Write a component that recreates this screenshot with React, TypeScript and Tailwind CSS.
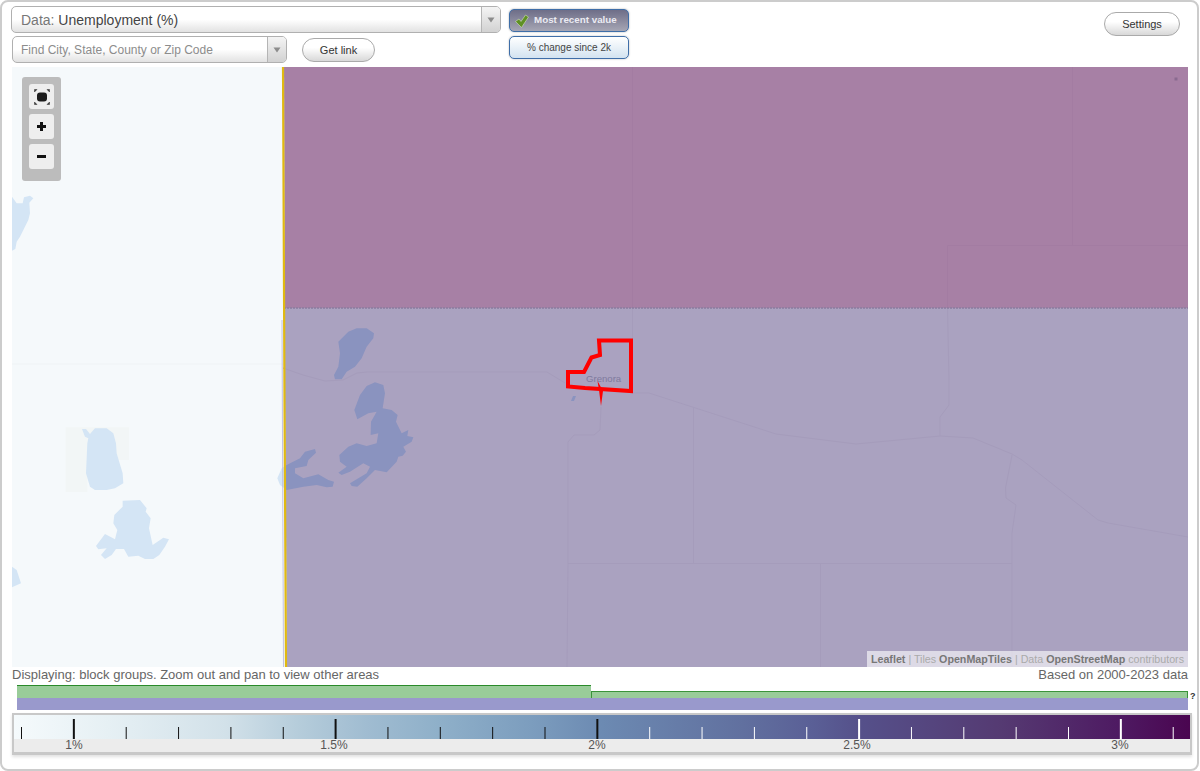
const ticks = Array.from({ length: 23 }, (_, i) => ({
  x: 7.5 + 52.35 * i,
  major: i % 5 === 1,
  light: i > 11,
}));

const legendLabels = [
  { text: '1%', x: 60 },
  { text: '1.5%', x: 320 },
  { text: '2%', x: 583 },
  { text: '2.5%', x: 843 },
  { text: '3%', x: 1106 },
];

const lake1 = 'M205,95 L235,65 L260,55 L290,55 L312,70 L310,85 L290,110 L275,145 L255,170 L230,185 L215,208 L195,208 L192,195 L205,170 L210,130 Z';
const lake2 = 'M253,300 L270,255 L290,228 L315,217 L340,225 L345,250 L338,295 L365,300 L383,315 L378,335 L395,370 L415,360 L412,378 L430,382 L425,395 L400,410 L408,425 L398,437 L385,440 L380,455 L350,487 L315,480 L290,505 L262,530 L245,528 L240,520 L290,490 L300,470 L280,460 L240,485 L215,495 L205,488 L230,470 L210,455 L208,435 L235,410 L260,400 L290,408 L320,400 L325,370 L302,375 L303,335 L320,305 L295,310 L262,328 Z';
const lake3 = 'M22,505 L35,475 L50,465 L90,445 L105,425 L135,417 L138,428 L115,450 L110,468 L75,475 L75,490 L100,505 L145,493 L175,510 L192,515 L188,530 L170,532 L140,525 L100,530 L50,540 L30,525 Z';

function MapCanvas() {
  return (
    <svg className="block h-full w-full" viewBox="12 67 1176 600">
      <defs>
        <clipPath id="state-clip">
          <polygon points="284,67 1188,67 1188,667 287,667 285,400" />
        </clipPath>
      </defs>
      <rect x="12" y="67" width="1176" height="600" fill="#f5f9fb" />

      {/* Basemap on the uncoloured side */}
      <path d="M12,364 L284,364" stroke="#eff3f5" strokeWidth="1" fill="none" />
      <g transform="translate(0 180) scale(0.3333)" fill="#d4e5f5">
        <path d="M197,742 H387 V840 H262 V936 H197 Z" fill="#f2f6f6" />
        <path d="M36,50 L50,70 L68,70 L72,52 L90,47 L100,55 L88,68 L90,100 L85,120 L60,170 L50,185 L46,207 L36,212 Z" />
        <path d="M246,747 L258,747 L270,762 L285,745 L320,745 L340,760 L348,790 L350,820 L368,880 L370,910 L345,925 L320,930 L285,930 L270,920 L258,880 L262,790 L265,775 L255,770 Z" />
        <path d="M368,962 L420,960 L440,985 L437,995 L452,1015 L447,1045 L458,1095 L490,1073 L507,1078 L495,1100 L478,1125 L460,1137 L435,1137 L415,1127 L385,1130 L372,1107 L348,1107 L335,1125 L315,1137 L303,1125 L320,1105 L295,1108 L288,1098 L315,1062 L345,1078 L352,1050 L340,1030 L343,1005 L368,980 Z" />
        <path d="M36,1160 L50,1170 L63,1210 L36,1222 Z" />
      </g>
      <g transform="translate(270 310) scale(0.3333)" fill="#d4e5f5">
        <path d={lake3} />
      </g>

      {/* Choropleth fills */}
      <g clipPath="url(#state-clip)">
        <rect x="280" y="67" width="910" height="241" fill="#a780a5" />
        <rect x="280" y="308" width="910" height="360" fill="#aaa2c0" />
        <g transform="translate(270 310) scale(0.3333)" fill="#8a93bf">
          <path d={lake1} />
          <path d={lake2} />
          <path d={lake3} />
        </g>
        <path d="M571,401 L573,396 L576,396 L574,401 Z" fill="#8a93bf" />
      </g>

      {/* Boundaries and roads */}
      <g fill="none" stroke="#a37ca2" strokeWidth="1">
        <path d="M632.5,67 V308 M1072.5,67 V245.5 M947.5,308 V245.5 H1188" />
      </g>
      <g fill="none" stroke="#a59cbb" strokeWidth="1">
        <path d="M283,368 L303,375 L325,381 L343,380 L357,373 L367,372 L547,372 L565,383" />
        <path d="M632.5,308 V340 M632,393 L649,393 L776,434 L856,444 L940,436 L973,438 L1012,454 L1022,460 L1098,520 L1108,523 L1188,537" />
        <path d="M947.5,308 L949,380 V405 L940,417 V436" />
        <path d="M1012,455 L1005.5,488 L1006,498 L1016,505 L1012,533 V667" />
        <path d="M693.5,408 V563.5 M568,563.5 H1012 M820.5,563.5 V667" />
        <path d="M601,407 L600,430 L594,435 H574 L568,442 V563 L567,667" />
      </g>
      <path d="M284,308 H1188" stroke="#8a7c9f" strokeWidth="1.5" strokeDasharray="2 1" fill="none" />
      <rect x="1174.5" y="77.5" width="3" height="3" fill="#8a6a90" />

      {/* State line */}
      <path d="M283,67 L284.5,400 L286,667" stroke="#e0b912" strokeWidth="2.2" fill="none" />
      <path d="M282,320 L283.5,667" stroke="#b4b4d8" strokeWidth="0.8" fill="none" />

      {/* Selected place */}
      <text x="586" y="382" fontSize="9.6" fill="#7f7a9e" fontFamily="'Liberation Sans', sans-serif">
        Grenora
      </text>
      <path
        d="M599,340.5 L631,340.5 L631,391 L585,388 L568,386.5 L568,372 L584,372 L591.5,357.5 L600,355 Z"
        fill="none"
        stroke="#ff0000"
        strokeWidth="4"
      />
      <path d="M597.5,381 L599,390 L601,406 L603,391 Z" fill="#ff0000" />
    </svg>
  );
}

function ChevronSlot({ className }: { className: string }) {
  return (
    <div className={`flex items-center justify-center border-l border-[#b5b5b5] bg-gradient-to-b from-[#f4f4f4] to-[#d2d2d2] ${className}`}>
      <svg width="8" height="6" viewBox="0 0 8 6">
        <path d="M0.5,0.5 H7.5 L4,5.5 Z" fill="#8c8c8c" />
      </svg>
    </div>
  );
}

function MapControls() {
  return (
    <div className="absolute left-[10px] top-[10px] flex h-[104px] w-[39px] flex-col gap-[5px] rounded-[3px] bg-[#bcbcbc] px-[7px] py-[7px]">
      <button className="flex h-[25px] w-[25px] items-center justify-center rounded-[3px] bg-[#eeeeee]">
        <svg width="16" height="16" viewBox="0 0 16 16">
          <rect x="3" y="3.5" width="10" height="9" rx="3" fill="#1c1c1c" />
          <path d="M0.5,0.5 H3 L0.5,3 Z M15.5,0.5 H13 L15.5,3 Z M0.5,15.5 H3 L0.5,13 Z M15.5,15.5 H13 L15.5,13 Z" fill="#333" stroke="#333" strokeWidth="0.5" />
        </svg>
      </button>
      <button className="flex h-[25px] w-[25px] items-center justify-center rounded-[3px] bg-[#eeeeee]">
        <svg width="9" height="9" viewBox="0 0 9 9">
          <path d="M3,0 H6 V3 H9 V6 H6 V9 H3 V6 H0 V3 H3 Z" fill="#111" />
        </svg>
      </button>
      <button className="flex h-[25px] w-[25px] items-center justify-center rounded-[3px] bg-[#eeeeee]">
        <svg width="9" height="3" viewBox="0 0 9 3">
          <rect width="9" height="3" fill="#111" />
        </svg>
      </button>
    </div>
  );
}

export default function App() {
  return (
    <div className="h-[771px] w-[1199px] overflow-hidden rounded-[8px] border-2 border-[#cccccc] bg-white font-['Liberation_Sans',Arial,sans-serif]">
      {/* Toolbar */}
      <div className="flex h-[65px]">
        <div className="ml-[9px] mt-[4px] w-[490px]">
          <div className="flex h-[27px] overflow-hidden rounded-[5px] border border-[#b0b0b0] bg-gradient-to-b from-white from-50% to-[#e2e2e2]">
            <div className="flex-1 pl-[9px] text-[14px] leading-[26px] text-[#444]">
              <span className="text-[#777]">Data:</span> Unemployment (%)
            </div>
            <ChevronSlot className="w-[19px]" />
          </div>
          <div className="mt-[3px] flex">
            <div className="ml-px flex h-[27px] w-[275px] overflow-hidden rounded-[5px] border border-[#b0b0b0] bg-gradient-to-b from-white from-50% to-[#e2e2e2]">
              <div className="flex-1 pl-[8px] text-[12px] leading-[26px] text-[#8c8c8c]">Find City, State, County or Zip Code</div>
              <ChevronSlot className="w-[19px]" />
            </div>
            <button className="ml-[15px] mt-[2px] h-[24px] w-[73px] rounded-full border border-[#aaa] bg-gradient-to-b from-white from-40% to-[#d8d8d8] text-[11px] text-[#333]">
              Get link
            </button>
          </div>
        </div>

        <div className="ml-[8px] mt-[7px] flex w-[120px] flex-col gap-[4px]">
          <div className="flex h-[23px] items-center rounded-[5px] border border-[#3f6ea8] bg-gradient-to-b from-[#6e6e88] to-[#a6a6b4] pl-[5px] shadow-[0_0_2px_rgba(0,0,0,0.35)]">
            <svg width="14" height="14" viewBox="0 0 14 14">
              <path d="M0.5,7.5 L4,5 L6,7.5 L10.5,1 L13.5,3 L6.5,13.5 Z" fill="#5f9024" stroke="#d4dfc0" strokeWidth="0.6" />
            </svg>
            <span className="ml-[5px] text-[9.8px] font-bold text-[#ebebf2]">Most recent value</span>
          </div>
          <div className="flex h-[23px] items-center justify-center rounded-[5px] border border-[#3f6ea8] bg-gradient-to-b from-white to-[#d3e3f0] text-[10px] text-[#444] shadow-[0_0_2px_rgba(0,0,0,0.3)]">
            % change since 2k
          </div>
        </div>

        <button className="ml-auto mr-[17px] mt-[10px] h-[24px] w-[76px] rounded-full border border-[#aaa] bg-gradient-to-b from-white from-40% to-[#d8d8d8] text-[11px] text-[#333]">
          Settings
        </button>
      </div>

      {/* Map */}
      <div className="relative ml-[10px] h-[600px] w-[1176px] overflow-hidden">
        <MapCanvas />
        <MapControls />
        <div className="absolute bottom-0 right-0 flex h-[16px] items-center bg-white/60 px-[4px] text-[10.7px] text-[#aaa]">
          <span className="font-bold text-[#777]">Leaflet</span>
          <span className="whitespace-pre"> | Tiles </span>
          <span className="font-bold text-[#777]">OpenMapTiles</span>
          <span className="whitespace-pre"> | Data </span>
          <span className="font-bold text-[#777]">OpenStreetMap</span>
          <span className="whitespace-pre"> contributors</span>
        </div>
      </div>

      {/* Status line */}
      <div className="ml-[10px] flex h-[16px] w-[1176px] items-center justify-between text-[13px] leading-[16px] text-[#666]">
        <span>Displaying: block groups. Zoom out and pan to view other areas</span>
        <span>Based on 2000-2023 data</span>
      </div>

      {/* Data availability bars */}
      <div className="relative ml-[15px] mt-[2px] w-[1171px]">
        <div className="flex h-[13px] items-end">
          <div className="h-[13px] w-[574px] border-t border-[#2a8a2a] bg-[#99cc99]" />
          <div className="h-[7px] flex-1 border-l border-r border-t border-[#3a943a] bg-[#99cc99]" />
        </div>
        <div className="h-[12px] bg-[#9999cc]" />
        <span className="absolute left-[1173px] top-[6px] text-[9px] font-bold leading-[10px] text-[#333]">?</span>
      </div>

      {/* Legend */}
      <div className="ml-[10px] mt-[3px] w-[1180px] border-2 border-b-[3px] border-[#c8c8c8] shadow-[0_2px_3px_rgba(0,0,0,0.12)]">
        <div className="relative h-[24px] bg-[linear-gradient(to_right,#f5fafc_0%,#e6f0f4_8%,#d2e1e9_18%,#b6cddb_24%,#a0bcd1_30%,#8fb0c9_36%,#7c9dbe_44%,#6c8ab2_50%,#61709f_62%,#5a5f96_68%,#55508a_72%,#553a72_84%,#4e1a62_94%,#4a0550_100%)]">
          <svg className="absolute inset-0 h-full w-full" viewBox="0 0 1176 24">
            {ticks.map((t) => (
              <rect
                key={t.x}
                x={t.major ? t.x - 1 : t.x - 0.5}
                y={t.major ? 4 : 12}
                width={t.major ? 2 : 1}
                height={t.major ? 20 : 12}
                fill={t.light ? '#ffffff' : '#111111'}
              />
            ))}
          </svg>
        </div>
        <div className="relative h-[13px] bg-[#ececec] text-[12px] leading-[13px] text-[#555]">
          {legendLabels.map((l) => (
            <span key={l.text} className="absolute -translate-x-1/2" style={{ left: l.x }}>
              {l.text}
            </span>
          ))}
        </div>
      </div>
    </div>
  );
}
